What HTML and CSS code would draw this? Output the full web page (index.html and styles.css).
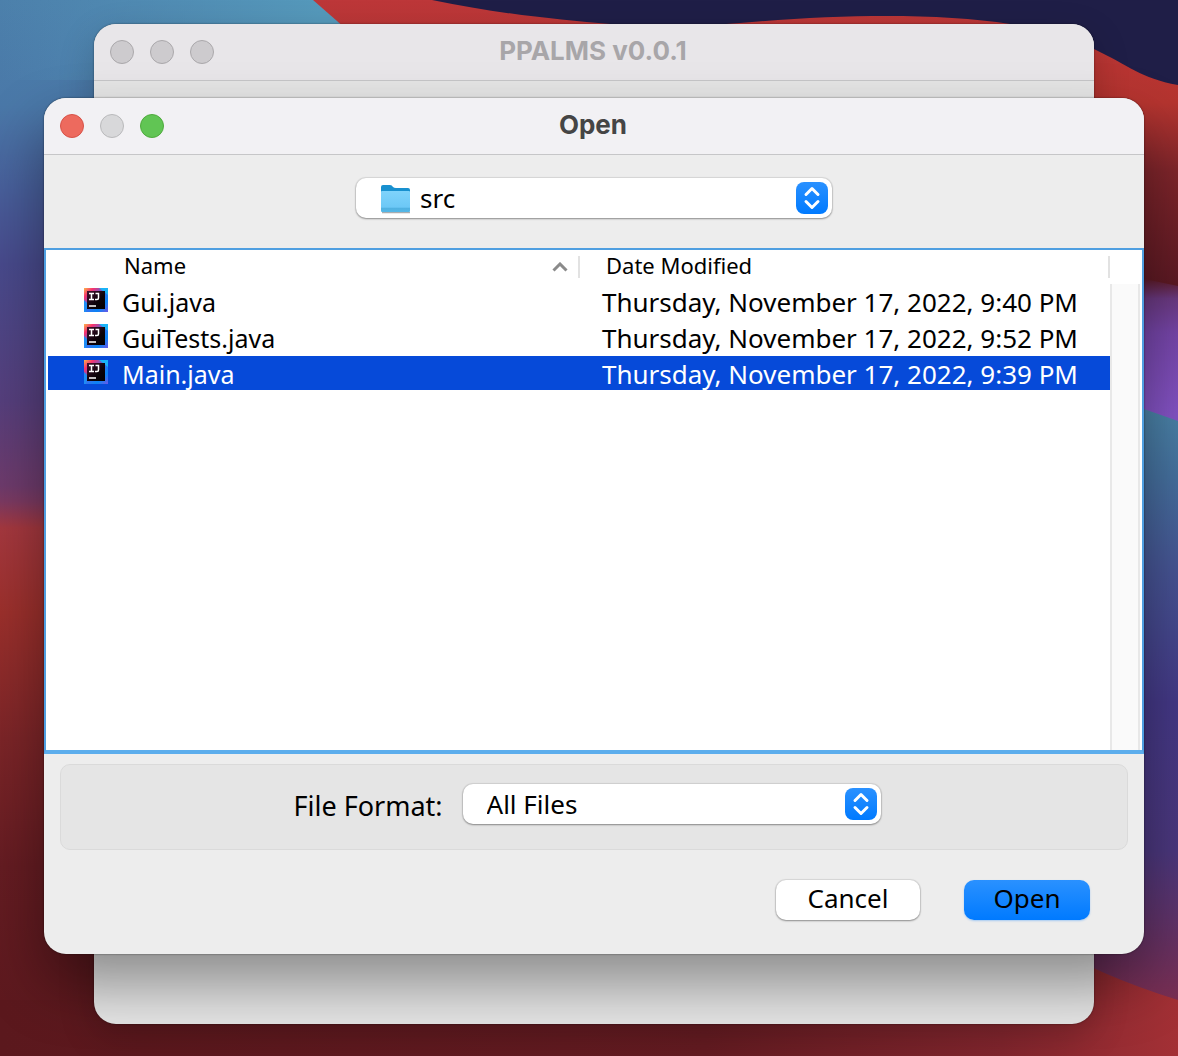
FILE: index.html
```html
<!DOCTYPE html>
<html lang="en">
<head>
<meta charset="utf-8">
<title>Open</title>
<meta name="viewport" content="width=device-width, initial-scale=1">
<link rel="stylesheet" href="styles.css">
</head>
<body>
<svg width="0" height="0" class="defs" aria-hidden="true">
  <defs>
    <linearGradient id="ij-a" x1="0" y1="0" x2="1" y2="1">
      <stop offset="0" stop-color="#fdb64a"/><stop offset=".2" stop-color="#f8316f"/><stop offset=".5" stop-color="#3a6ff0"/><stop offset=".75" stop-color="#0a84f5"/><stop offset="1" stop-color="#6b57e8"/>
    </linearGradient>
    <linearGradient id="ij-b" x1="0" y1="0" x2="1" y2="1">
      <stop offset="0" stop-color="#43102f"/><stop offset=".6" stop-color="#0b0208"/><stop offset="1" stop-color="#000"/>
    </linearGradient>
    <linearGradient id="folder" x1="0" y1="0" x2="0" y2="1">
      <stop offset="0" stop-color="#7fd3fb"/><stop offset=".78" stop-color="#6cc8f6"/><stop offset=".8" stop-color="#4fb0e0"/><stop offset="1" stop-color="#55b8e8"/>
    </linearGradient>
    <symbol id="java-file" viewBox="0 0 24 24">
      <rect width="24" height="24" fill="url(#ij-a)"/>
      <path d="M0 12 4 16 2 24H0z" fill="#1e8df5"/>
      <path d="M15 0 24 0 24 7z" fill="#19b3f7"/>
      <rect x="3" y="3" width="18" height="18" fill="url(#ij-b)"/>
      <path d="M5 5.500H10M7.500 5.500V11.500M5 11.500H10M11.500 5.500H14.500V10Q14.500 11.500 13 11.500H11" fill="none" stroke="#fff" stroke-width="1.500"/>
      <path d="M5 18H12" stroke="#fff" stroke-width="1.500"/>
    </symbol>
  </defs>
</svg>
<div class="desktop">
  <svg class="wallpaper" viewBox="0 0 1178 1056" preserveAspectRatio="none" aria-hidden="true">
    <defs>
      <linearGradient id="w-left" x1="0" y1="0" x2="0" y2="1056" gradientUnits="userSpaceOnUse">
        <stop offset="0" stop-color="#4c80ab"/><stop offset=".1" stop-color="#4a78a8"/><stop offset=".18" stop-color="#485f9b"/><stop offset=".25" stop-color="#484a8c"/><stop offset=".38" stop-color="#563f7d"/><stop offset=".46" stop-color="#6e3b6c"/><stop offset=".475" stop-color="#7c3a62"/><stop offset=".5" stop-color="#a5383f"/><stop offset=".58" stop-color="#9c302c"/><stop offset=".7" stop-color="#7c2528"/><stop offset=".82" stop-color="#651c22"/><stop offset="1" stop-color="#5b181d"/>
      </linearGradient>
      <linearGradient id="w-top" x1="0" y1="0" x2="320" y2="0" gradientUnits="userSpaceOnUse">
        <stop offset="0" stop-color="#5596bb" stop-opacity="0"/><stop offset="1" stop-color="#5599bb"/>
      </linearGradient>
      <linearGradient id="w-red" x1="0" y1="0" x2="0" y2="285" gradientUnits="userSpaceOnUse">
        <stop offset="0" stop-color="#bd3739"/><stop offset=".36" stop-color="#b5342f"/><stop offset=".6" stop-color="#7f252b"/><stop offset="1" stop-color="#5c1923"/>
      </linearGradient>
      <linearGradient id="w-purple" x1="0" y1="278" x2="0" y2="415" gradientUnits="userSpaceOnUse">
        <stop offset="0" stop-color="#5c1923"/><stop offset=".15" stop-color="#6a3980"/><stop offset=".4" stop-color="#7545a8"/><stop offset="1" stop-color="#8453c5"/>
      </linearGradient>
      <linearGradient id="w-blue" x1="0" y1="405" x2="0" y2="1000" gradientUnits="userSpaceOnUse">
        <stop offset="0" stop-color="#4a84a8"/><stop offset=".12" stop-color="#45709e"/><stop offset=".27" stop-color="#465594"/><stop offset=".5" stop-color="#443886"/><stop offset=".75" stop-color="#4b377d"/><stop offset="1" stop-color="#792e52"/>
      </linearGradient>
      <linearGradient id="w-bottom" x1="0" y1="0" x2="1178" y2="0" gradientUnits="userSpaceOnUse">
        <stop offset="0" stop-color="#5b181d"/><stop offset=".6" stop-color="#651c22"/><stop offset=".85" stop-color="#82262e"/><stop offset="1" stop-color="#a33035"/>
      </linearGradient>
    </defs>
    <rect width="600" height="1056" fill="url(#w-left)"/>
    <rect width="600" height="80" fill="url(#w-top)"/>
    <path d="M313 0 L345 28 L500 120 L1000 300 H1178 V0z" fill="url(#w-red)"/>
    <path d="M432 0 C500 14 560 20 610 24 C660 27 700 26 740 23 C840 14 940 13 1010 24 C1050 30 1070 38 1094 49 C1130 66 1140 78 1178 85 V0z" fill="#1f1e47"/>
    <path d="M600 278 H1140 L1178 286 V430 H600z" fill="url(#w-purple)"/>
    <path d="M600 400 H1120 L1144 409 L1178 421 V1056 H600z" fill="url(#w-blue)"/>
    <path d="M0 1000 H600 L1040 940 Q1100 976 1178 1000 V1056 H0z" fill="url(#w-bottom)"/>
  </svg>

  <section class="window window-back" aria-label="PPALMS v0.0.1">
    <header class="titlebar">
      <div class="lights"><span class="light"></span><span class="light"></span><span class="light"></span></div>
      <h1 class="title">PPALMS v0.0.1</h1>
    </header>
  </section>

  <section class="window dialog" role="dialog" aria-label="Open">
    <header class="titlebar">
      <div class="lights"><button class="light close" aria-label="Close"></button><button class="light" aria-label="Minimize" disabled></button><button class="light zoom" aria-label="Zoom"></button></div>
      <h2 class="title">Open</h2>
    </header>

    <div class="location">
      <div class="popup popup-wide">
        <svg class="folder" viewBox="0 0 32 30" aria-hidden="true">
          <path d="M2 28.500H30" stroke="#a9adb0" stroke-width="1.500"/>
          <path d="M1 3Q1 1 3 1H10Q12 1 13 3Q14 4 16 4H28Q30 4 30 6V12H1z" fill="#1890cf"/>
          <path d="M1 8Q1 7 2 7H29Q30 7 30 8V27Q30 28 29 28H2Q1 28 1 27z" fill="url(#folder)"/>
        </svg>
        <select class="with-icon" aria-label="Folder"><option>src</option></select>
        <svg class="arrows" viewBox="0 0 32 32" aria-hidden="true"><path d="M10 12.500 16 6.500 22 12.500M10 19.500 16 25.500 22 19.500"/></svg>
      </div>
    </div>

    <div class="browser">
      <div class="list">
        <table class="files">
          <thead>
            <tr>
              <th scope="col"><div class="head">Name<svg class="sort" viewBox="0 0 16 10" aria-hidden="true"><path d="M1.500 8.500 8 2 14.500 8.500"/></svg></div></th>
              <th scope="col"><div class="head">Date Modified</div></th>
            </tr>
          </thead>
          <tbody>
            <tr><td><div class="file"><svg class="file-icon" aria-hidden="true"><use href="#java-file"/></svg>Gui.java</div></td><td>Thursday, November 17, 2022, 9:40 PM</td></tr>
            <tr><td><div class="file"><svg class="file-icon" aria-hidden="true"><use href="#java-file"/></svg>GuiTests.java</div></td><td>Thursday, November 17, 2022, 9:52 PM</td></tr>
            <tr class="selected"><td><div class="file"><svg class="file-icon" aria-hidden="true"><use href="#java-file"/></svg>Main.java</div></td><td>Thursday, November 17, 2022, 9:39 PM</td></tr>
          </tbody>
        </table>
      </div>
      <div class="scroll-track"></div>
    </div>

    <div class="format">
      <label for="format">File Format:</label>
      <div class="popup">
        <select id="format"><option>All Files</option></select>
        <svg class="arrows" viewBox="0 0 32 32" aria-hidden="true"><path d="M10 12.500 16 6.500 22 12.500M10 19.500 16 25.500 22 19.500"/></svg>
      </div>
    </div>

    <footer class="actions">
      <button class="button cancel">Cancel</button>
      <button class="button open">Open</button>
    </footer>
  </section>
</div>
</body>
</html>
```
FILE: styles.css
```css
* { box-sizing: border-box; }

body {
  margin: 0;
  color: #000;
  font: 26px/34px "Noto Sans", "Open Sans", sans-serif;
}

.defs { position: absolute; }

.desktop {
  position: relative;
  display: grid;
  min-height: 100vh;
  overflow: hidden;
  background: #5b181d;
}

.wallpaper {
  position: absolute;
  inset: 0;
  width: 100%;
  height: 100%;
}

/* Both windows share one grid cell, so the dialog stacks over its parent. */
.window {
  position: relative;
  grid-area: 1 / 1;
  display: flex;
  flex-direction: column;
  overflow: hidden;
  border-radius: 22px;
  background: #ededed;
}

.window-back {
  margin: 24px 84px 32px 94px;
  background: #e6e6e6;
  box-shadow: 0 0 2px rgba(0, 0, 0, .5), 0 12px 36px rgba(0, 0, 0, .2);
}

.dialog {
  margin: 98px 34px 102px 44px;
  box-shadow: 0 0 2px rgba(0, 0, 0, .6), 0 30px 60px rgba(0, 0, 0, .4);
}

.titlebar {
  display: grid;
  grid-template-columns: 1fr auto 1fr;
  align-items: center;
  height: 57px;
  padding: 0 18px 0 16px;
  border-bottom: 1px solid #c6c6c8;
  background: #f2f1f4;
}

.window-back .titlebar { background: #e8e6e9; }

.title {
  margin: 0;
  padding-bottom: 2px;
  color: #454545;
  font: bold 26px/32px Inter, "Liberation Sans", sans-serif;
}

.window-back .title { color: #a8a6a9; }

.lights { display: flex; gap: 16px; }

.light {
  width: 24px;
  height: 24px;
  padding: 0;
  border: 1px solid #b9b9bb;
  border-radius: 50%;
  background: #d8d8da;
}

.window-back .light { border-color: #aaa8ab; background: #cdcbce; }
.light.close { border-color: #d75248; background: #ed6a5e; }
.light.zoom { border-color: #4faa3d; background: #61c554; }

.location {
  display: flex;
  justify-content: center;
  padding: 23px 0 30px;
}

.popup {
  position: relative;
  width: 418px;
  height: 40px;
}

.popup-wide { width: 476px; }

select {
  appearance: none;
  width: 100%;
  height: 100%;
  padding: 0 44px 0 24px;
  border: 0;
  border-radius: 10px;
  background: #fff;
  color: #000;
  font: inherit;
  box-shadow: 0 0 1px 1px rgba(0, 0, 0, .09), 0 1px 2px rgba(0, 0, 0, .35);
}

select.with-icon { padding-left: 64px; }

.folder {
  position: absolute;
  top: 6px;
  left: 24px;
  width: 32px;
  height: 30px;
}

.arrows {
  position: absolute;
  top: 4px;
  right: 4px;
  width: 32px;
  height: 32px;
  border-radius: 8px;
  background: linear-gradient(#2a91ff, #007aff);
  fill: none;
  stroke: #fff;
  stroke-width: 3;
  stroke-linecap: round;
  stroke-linejoin: round;
  pointer-events: none;
}

.browser {
  display: flex;
  flex: 1;
  border: 2px solid #4f9fe1;
  border-bottom: 4px solid #5cadec;
  background: #fff;
}

.list { flex: 1; padding-left: 2px; }

.files {
  width: 100%;
  border-spacing: 0 2px;
  table-layout: fixed;
}

.files th {
  height: 30px;
  padding: 0;
  font-size: 22px;
  font-weight: normal;
  line-height: 18px;
  text-align: left;
}

.files th:first-child { width: 532px; }

.head {
  display: flex;
  align-items: center;
  justify-content: space-between;
  padding: 0 10px 4px 26px;
  border-right: 2px solid #e2e2e2;
}

.files th:first-child .head { padding-left: 76px; }

.sort {
  width: 16px;
  height: 10px;
  margin-top: 4px;
  fill: none;
  stroke: #8a8a8a;
  stroke-width: 3;
}

.files td {
  height: 34px;
  padding: 2px 0 0 22px;
  line-height: 32px;
  white-space: nowrap;
}

.files td:first-child { padding-left: 36px; font-size: 25px; }

.file { display: flex; gap: 14px; }

.file-icon {
  width: 24px;
  height: 24px;
  margin-top: 2px;
}

.selected { background: #064ad9; color: #fff; }

.scroll-track {
  width: 30px;
  margin: 34px 2px 0 0;
  border: solid #e8e8e8;
  border-width: 0 2px;
  background: #fafafa;
}

.format {
  display: flex;
  align-items: center;
  justify-content: center;
  gap: 20px;
  height: 86px;
  margin: 10px 16px 0;
  padding: 0 14px 6px 0;
  border: 1px solid #dadada;
  border-radius: 10px;
  background: #e5e5e5;
}

.format label { padding-top: 4px; font-size: 27px; }

.actions {
  display: flex;
  justify-content: flex-end;
  gap: 44px;
  padding: 30px 54px 34px;
}

.button {
  width: 126px;
  height: 40px;
  padding: 0 0 4px;
  border: 0;
  border-radius: 10px;
  color: #000;
  font: inherit;
}

.cancel {
  width: 144px;
  background: #fff;
  box-shadow: 0 0 1px 1px rgba(0, 0, 0, .09), 0 1px 2px rgba(0, 0, 0, .35);
}

.open {
  background: linear-gradient(#2a91ff, #007aff);
  box-shadow: 0 1px 2px rgba(0, 122, 255, .3);
}
```
